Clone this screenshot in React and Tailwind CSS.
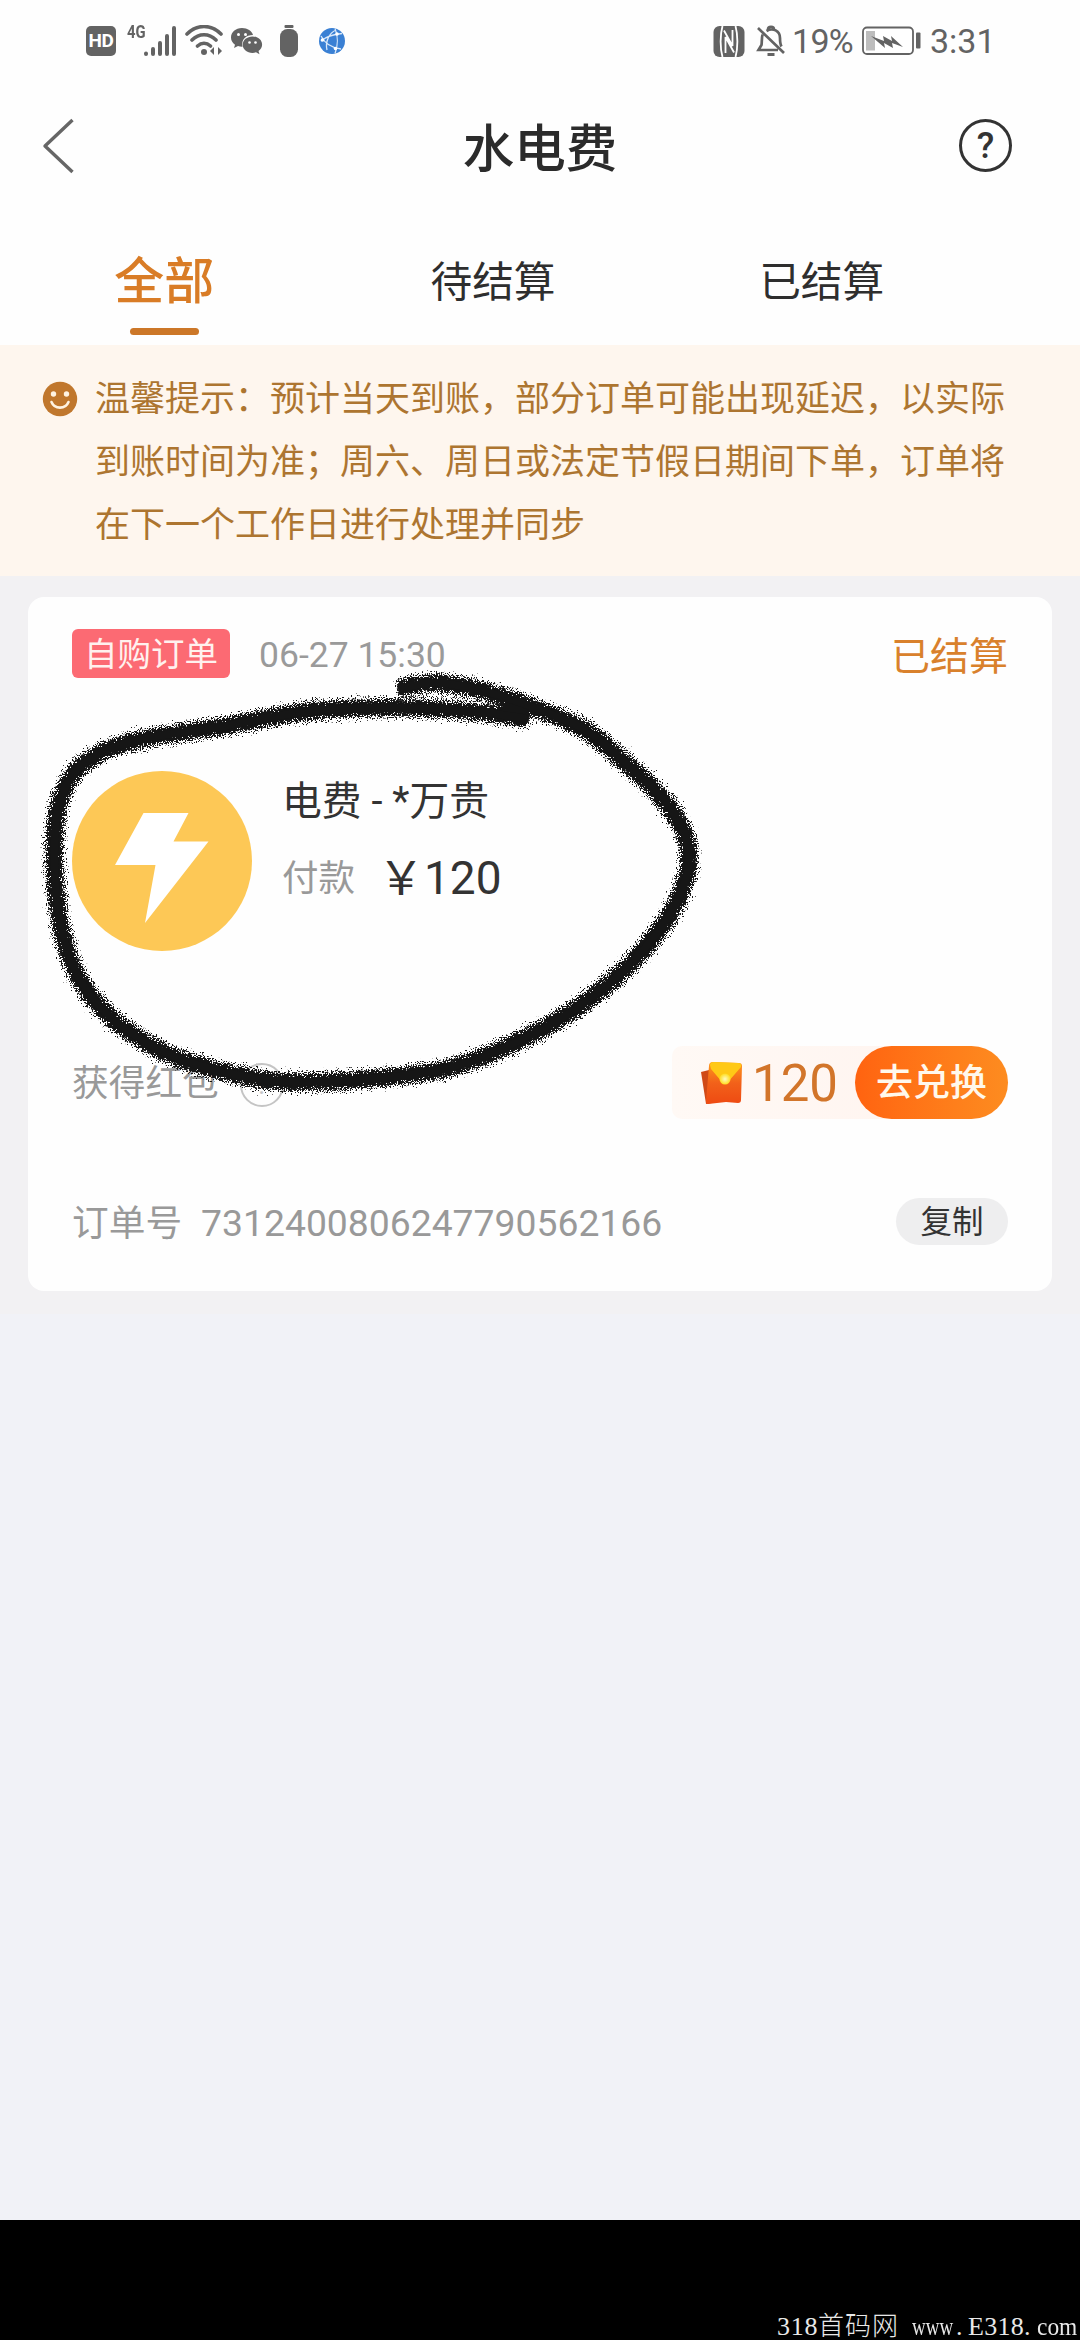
import React from 'react';

const STROKE_POINTS = [
  [398, 689], [416, 685], [440, 683], [487, 692], [540, 710], [587, 731], [627, 764], [661, 797], [682, 828],
  [689, 857], [683, 887], [663, 925], [625, 969], [580, 1006], [533, 1034], [480, 1058], [440, 1070],
  [380, 1078], [293, 1082], [237, 1075], [180, 1059], [137, 1037], [100, 1007], [75, 970], [61, 927],
  [55, 877], [55, 833], [60, 800], [77, 770], [107, 750], [153, 737], [220, 727], [303, 712],
  [370, 708], [437, 709], [487, 713], [529, 719],
];

// Smooth curve through every point of the pen stroke
function smoothPath(p) {
  let d = `M${p[0][0]} ${p[0][1]}`;
  for (let i = 0; i < p.length - 1; i++) {
    const a = p[Math.max(0, i - 1)];
    const b = p[i];
    const c = p[i + 1];
    const e = p[Math.min(p.length - 1, i + 2)];
    d += `C${b[0] + (c[0] - a[0]) / 6} ${b[1] + (c[1] - a[1]) / 6} ${c[0] - (e[0] - b[0]) / 6} ${c[1] - (e[1] - b[1]) / 6} ${c[0]} ${c[1]}`;
  }
  return d;
}

function PenCircle() {
  const d = smoothPath(STROKE_POINTS);
  return (
    <svg className="pointer-events-none absolute left-0 top-[640px]" width="740" height="480" viewBox="0 640 740 480" fill="none">
      <defs>
        <filter id="charcoal" filterUnits="userSpaceOnUse" x="0" y="640" width="740" height="480" colorInterpolationFilters="sRGB">
          <feTurbulence type="fractalNoise" baseFrequency="0.8" numOctaves="2" seed="4" result="n" />
          <feDisplacementMap in="SourceGraphic" in2="n" scale="20" xChannelSelector="R" yChannelSelector="G" />
        </filter>
      </defs>
      <g filter="url(#charcoal)" strokeLinejoin="round">
        <path d={d} stroke="#161616" strokeWidth="17.500" />
      </g>
      <path d={d} stroke="#161616" strokeWidth="8" />
    </svg>
  );
}

function StatusBar() {
  return (
    <div className="flex h-[82px] items-center justify-between pl-[86px] pr-[86px] text-[#636363]">
      <div className="flex h-8 items-center">
        <div className="flex size-[30px] items-center justify-center rounded-[5px] bg-[#636363] text-[19px] font-bold tracking-[-0.5px] text-white">HD</div>
        <span className="ml-[11px] -mt-[18px] w-[17px] origin-left scale-x-[0.780] text-[19px] font-bold leading-4">4G</span>
        <svg width="33" height="32" viewBox="0 0 33 32" fill="none" stroke="currentColor" strokeWidth="4" strokeLinecap="round">
          <path d="M2 28.5v.5M9 24v5M16 18v11M23 11v18M30 3v26" />
        </svg>
        <svg className="ml-[8px]" width="38" height="32" viewBox="0 0 38 32" fill="none" stroke="currentColor" strokeWidth="3.6" strokeLinecap="round">
          <path d="M2 9C12-1 26-1 36 9M7 15c7-7 17-7 24 0M12.5 21c4-3.500 9-3.500 13 0" />
          <circle cx="19" cy="27" r="3" fill="currentColor" stroke="none" />
          <path d="M29 22v8l-4-4zM33 22v8l4-4z" fill="currentColor" stroke="none" />
        </svg>
        <svg className="ml-[7px]" width="34" height="32" viewBox="0 0 34 32" fill="currentColor">
          <path d="M12 3C5.500 3 1 7.300 1 12.500c0 3 1.500 5.500 4 7.200L4 23l4-2c1.500.5 3 .8 4.500.7C11 14.500 16 10 23 10 22 6 17.500 3 12 3z" />
          <path d="M22.500 11.500c-5.500 0-9.800 3.600-9.800 8.200s4.300 8.200 9.800 8.200c1.200 0 2.400-.2 3.500-.6l3.500 2-1-3.300c2.200-1.500 3.600-3.700 3.600-6.300 0-4.600-4-8.200-9.600-8.200z" />
          <g fill="#fff"><circle cx="8.500" cy="9.500" r="1.500" /><circle cx="15.500" cy="9.500" r="1.500" /><circle cx="19.500" cy="17.500" r="1.300" /><circle cx="25.500" cy="17.500" r="1.300" /></g>
        </svg>
        <svg className="ml-[15px]" width="20" height="34" viewBox="0 0 20 34" fill="currentColor">
          <rect x="5.500" y="1" width="9" height="3" rx="1" />
          <rect x="1" y="5" width="18" height="28" rx="7.500" />
        </svg>
        <svg className="ml-[19px]" width="28" height="28" viewBox="0 0 28 28">
          <circle cx="14" cy="14" r="13" fill="#3a80d4" />
          <path d="M17 1.500c3 7 3 17 0 25M3 14c7-6 15-7 21-7.500M3 9c4 8 12 12 20 13M9 23C7 15 11 6 18 3" fill="none" stroke="#d9e8fa" strokeWidth="1.300" />
          <circle cx="19" cy="7" r="1.800" fill="#fff" /><circle cx="4.500" cy="13" r="1.800" fill="#fff" /><circle cx="17.500" cy="21.500" r="1.800" fill="#fff" />
        </svg>
      </div>
      <div className="flex h-8 items-center">
        <svg width="32" height="31" viewBox="0 0 32 31">
          <rect x="0.500" width="31" height="31" rx="6" fill="currentColor" />
          <path d="M9.500 0C7 9 7 22 9.500 31M22.500 0c2.500 9 2.500 22 0 31" fill="none" stroke="#fff" strokeWidth="1.800" />
          <path d="M12.500 27V11l8.500 15.500M19.500 4V20L11 4.500" fill="none" stroke="#fff" strokeWidth="1.800" />
        </svg>
        <svg className="ml-[11px]" width="30" height="32" viewBox="0 0 30 32" fill="none" stroke="currentColor" strokeWidth="2.700">
          <path d="M2 3l26 25M6.500 9.500C5.500 13 6 18 5.500 20L2.500 25H22M10.500 6C17 2 24 6 24 13c0 4 0 6 1.500 8.500M12 4.500C12 .8 18 .8 18 4.500" />
          <path d="M11.500 29.500h7" strokeWidth="3" />
        </svg>
        <span className="ml-[6px] w-[62px] whitespace-nowrap text-[34px] leading-8 tracking-[-0.7px]">19%</span>
        <svg className="ml-[7px]" width="60" height="30" viewBox="0 0 60 30">
          <rect x="2" y="1.500" width="50" height="26.500" rx="4" fill="#fff" stroke="currentColor" strokeWidth="1.800" />
          <rect x="5" y="5" width="9" height="19.500" fill="#bdbdbd" />
          <path d="M10 10l13 5-1-5 9 5-1-5 12 11-11-4 1 5-9-5 1 5z" fill="currentColor" />
          <rect x="55" y="6.500" width="4.500" height="16" rx="1" fill="currentColor" />
        </svg>
        <span className="ml-[9px] w-[64px] whitespace-nowrap text-[34px] leading-8">3:31</span>
      </div>
    </div>
  );
}

function Header() {
  return (
    <div className="flex h-[130px] items-center justify-between pl-[42px] pr-[68px]">
      <svg className="-mt-[2px]" width="54" height="56" viewBox="0 0 54 56" fill="none" stroke="#666" strokeWidth="3.400">
        <path d="M30.500 2L3 28l27.500 26" strokeLinejoin="round" />
      </svg>
      <h1 className="pl-[25px] pt-[6px] text-[51.500px] font-medium leading-[60px] text-[#2b2b2b]">水电费</h1>
      <div className="-mt-[3px] flex size-[53px] items-center justify-center rounded-full border-[3.500px] border-[#333] text-[36px] font-medium leading-none text-[#333]">?</div>
    </div>
  );
}

function Tabs() {
  return (
    <div className="grid h-[133px] w-[986px] grid-cols-3 pt-[39px] text-center text-[41.700px] leading-[63px] text-[#2e2e2e]">
      <div className="flex flex-col items-center text-[50px] font-medium text-[#d97c26]">
        全部
        <span className="mt-[14px] h-[7px] w-[69px] rounded-full bg-[#cc7728]" />
      </div>
      <div>待结算</div>
      <div>已结算</div>
    </div>
  );
}

function Notice() {
  return (
    <div className="flex h-[231px] bg-[#fef6ee] pl-[42px] pt-[23px]">
      <svg className="mt-[13px]" width="36" height="36" viewBox="0 0 36 36">
        <circle cx="18" cy="18" r="17.200" fill="#c0772d" />
        <circle cx="11.500" cy="13" r="2.700" fill="#fff3e2" /><circle cx="24.500" cy="13" r="2.700" fill="#fff3e2" />
        <path d="M9.500 21c3 7.500 14 7.500 17 0" fill="none" stroke="#fff3e2" strokeWidth="2.600" strokeLinecap="round" />
      </svg>
      <p className="ml-[17px] whitespace-nowrap text-[35px] leading-[63px] text-[#ad7530]">
        温馨提示：预计当天到账，部分订单可能出现延迟，以实际
        <br />
        到账时间为准；周六、周日或法定节假日期间下单，订单将
        <br />
        在下一个工作日进行处理并同步
      </p>
    </div>
  );
}

function RedPacket() {
  return (
    <svg width="44" height="46" viewBox="0 0 44 46">
      <defs>
        <linearGradient id="packet" x1="0" y1="0" x2="0" y2="1"><stop offset="0" stopColor="#ff9a1c" /><stop offset="0.500" stopColor="#f2611a" /><stop offset="1" stopColor="#ee4a12" /></linearGradient>
        <radialGradient id="seal"><stop offset="0" stopColor="#fffbc0" /><stop offset="1" stopColor="#ffdc20" /></radialGradient>
      </defs>
      <path d="M2 12l8-2 3 33-6 1z" fill="#d04a17" />
      <path d="M10 6q0-4 4-4l26 1q3 0 3 3l-1 34q0 3-3 3l-12-1-18 2q-2 0-2-3z" fill="url(#packet)" />
      <path d="M11 5q0-3 4-3l24 1q4 0 3 4L29 22q-3 3-6 0L12 9z" fill="#ffc916" />
      <circle cx="26" cy="19" r="5.500" fill="url(#seal)" />
    </svg>
  );
}

function OrderCard() {
  return (
    <div className="mx-[28px] flex h-[694px] flex-col rounded-[16px] bg-[#fefefe] px-[44px] pt-[32px]">
      <div className="flex h-[49px] items-center">
        <span className="flex h-[49px] w-[158px] items-center justify-center rounded-[6px] bg-[#fc6a73] pt-[2px] text-[33.500px] leading-[47px] text-[#fff1ee]">自购订单</span>
        <span className="ml-[29px] pt-[3px] text-[35.500px] leading-[46px] text-[#9a9a9a]">06-27 15:30</span>
        <span className="ml-auto pt-[8px] text-[39px] leading-[49px] text-[#d9812c]">已结算</span>
      </div>

      <div className="mt-[93px] flex h-[180px]">
        <svg width="180" height="180" viewBox="0 0 180 180">
          <circle cx="90" cy="90" r="90" fill="#fdc856" />
          <path d="M71.500 42h45L101.500 70.500h35L73 152l10.500-58H43z" fill="#fff" />
        </svg>
        <div className="ml-[30px] flex flex-col">
          <div className="mt-[6px] whitespace-nowrap text-[39.800px] leading-[50px] text-[#333]">电费 - *万贵</div>
          <div className="mt-[22px] flex items-center leading-[56px]">
            <span className="pt-[2px] text-[36.500px] text-[#999]">付款</span>
            <span className="ml-[23px] text-[46px] text-[#333]">￥120</span>
          </div>
        </div>
      </div>

      <div className="mt-[95px] flex h-[73px] items-center">
        <span className="pt-[3px] text-[36.700px] leading-[50px] text-[#999]">获得红包</span>
        <span className="ml-[21px] mt-[5px] flex size-[44px] items-center justify-center rounded-full border-[2.500px] border-[#c4c4c4] text-[28px] leading-none text-[#c4c4c4]">?</span>
        <div className="ml-auto flex h-[73px] w-[336px] items-center rounded-[36px] rounded-l-[10px] bg-gradient-to-r from-[#fff9f5] to-[#fff3ee] pl-[27px]">
          <RedPacket />
          <span className="ml-[9px] w-[88px] pt-[3px] text-[51px] leading-[60px] text-[#d2752a]">120</span>
          <span className="ml-auto flex h-[73px] w-[153px] items-center justify-center rounded-full bg-gradient-to-r from-[#ff6310] to-[#fd8c20] pt-[2px] text-[37px] font-medium text-[#fff8ec]">去兑换</span>
        </div>
      </div>

      <div className="mt-[78px] flex h-[49px] items-center">
        <span className="pt-[4px] text-[36.700px] leading-[45px] text-[#999]">订单号</span>
        <span className="ml-[19px] pt-[4px] text-[37.300px] leading-[45px] text-[#999]">7312400806247790562166</span>
        <span className="ml-auto flex h-[47px] w-[112px] items-center justify-center rounded-full bg-[#eeeeef] pt-[3px] text-[31.500px] leading-[44px] text-[#333]">复制</span>
      </div>
    </div>
  );
}

function Footer() {
  return (
    <div className="flex h-[120px] items-end justify-end bg-black text-[#e8e8e8]">
      <div className="flex h-[26px] w-[303px] items-center whitespace-nowrap font-['Liberation_Serif','Noto_Sans_CJK_SC',serif] text-[26px] leading-[26px]">
        <span className="w-[41px] tracking-[0.700px]">318</span>
        <span className="w-[86px] font-light tracking-[1px]">首码网</span>
        <span className="ml-[8px] w-[42px] origin-left scale-x-[0.730]">www</span>
        <span className="w-[14px] pl-[2px]">.</span>
        <span className="w-[55px] tracking-[0.300px]">E318</span>
        <span className="w-[14px] pl-[1px]">.</span>
        <span className="w-[42px] origin-left scale-x-90">com</span>
      </div>
    </div>
  );
}

export default function App() {
  return (
    <div className="relative flex h-[2340px] w-[1080px] flex-col overflow-hidden bg-[#f1f2f7] font-[Roboto,'Noto_Sans_CJK_SC',sans-serif]">
      <div className="bg-[#fefefe]">
        <StatusBar />
        <Header />
        <Tabs />
      </div>
      <Notice />
      <div className="h-[738px] bg-[#f2f1f3] pt-[21px]">
        <OrderCard />
      </div>
      <div className="flex-1" />
      <Footer />
      <PenCircle />
    </div>
  );
}
